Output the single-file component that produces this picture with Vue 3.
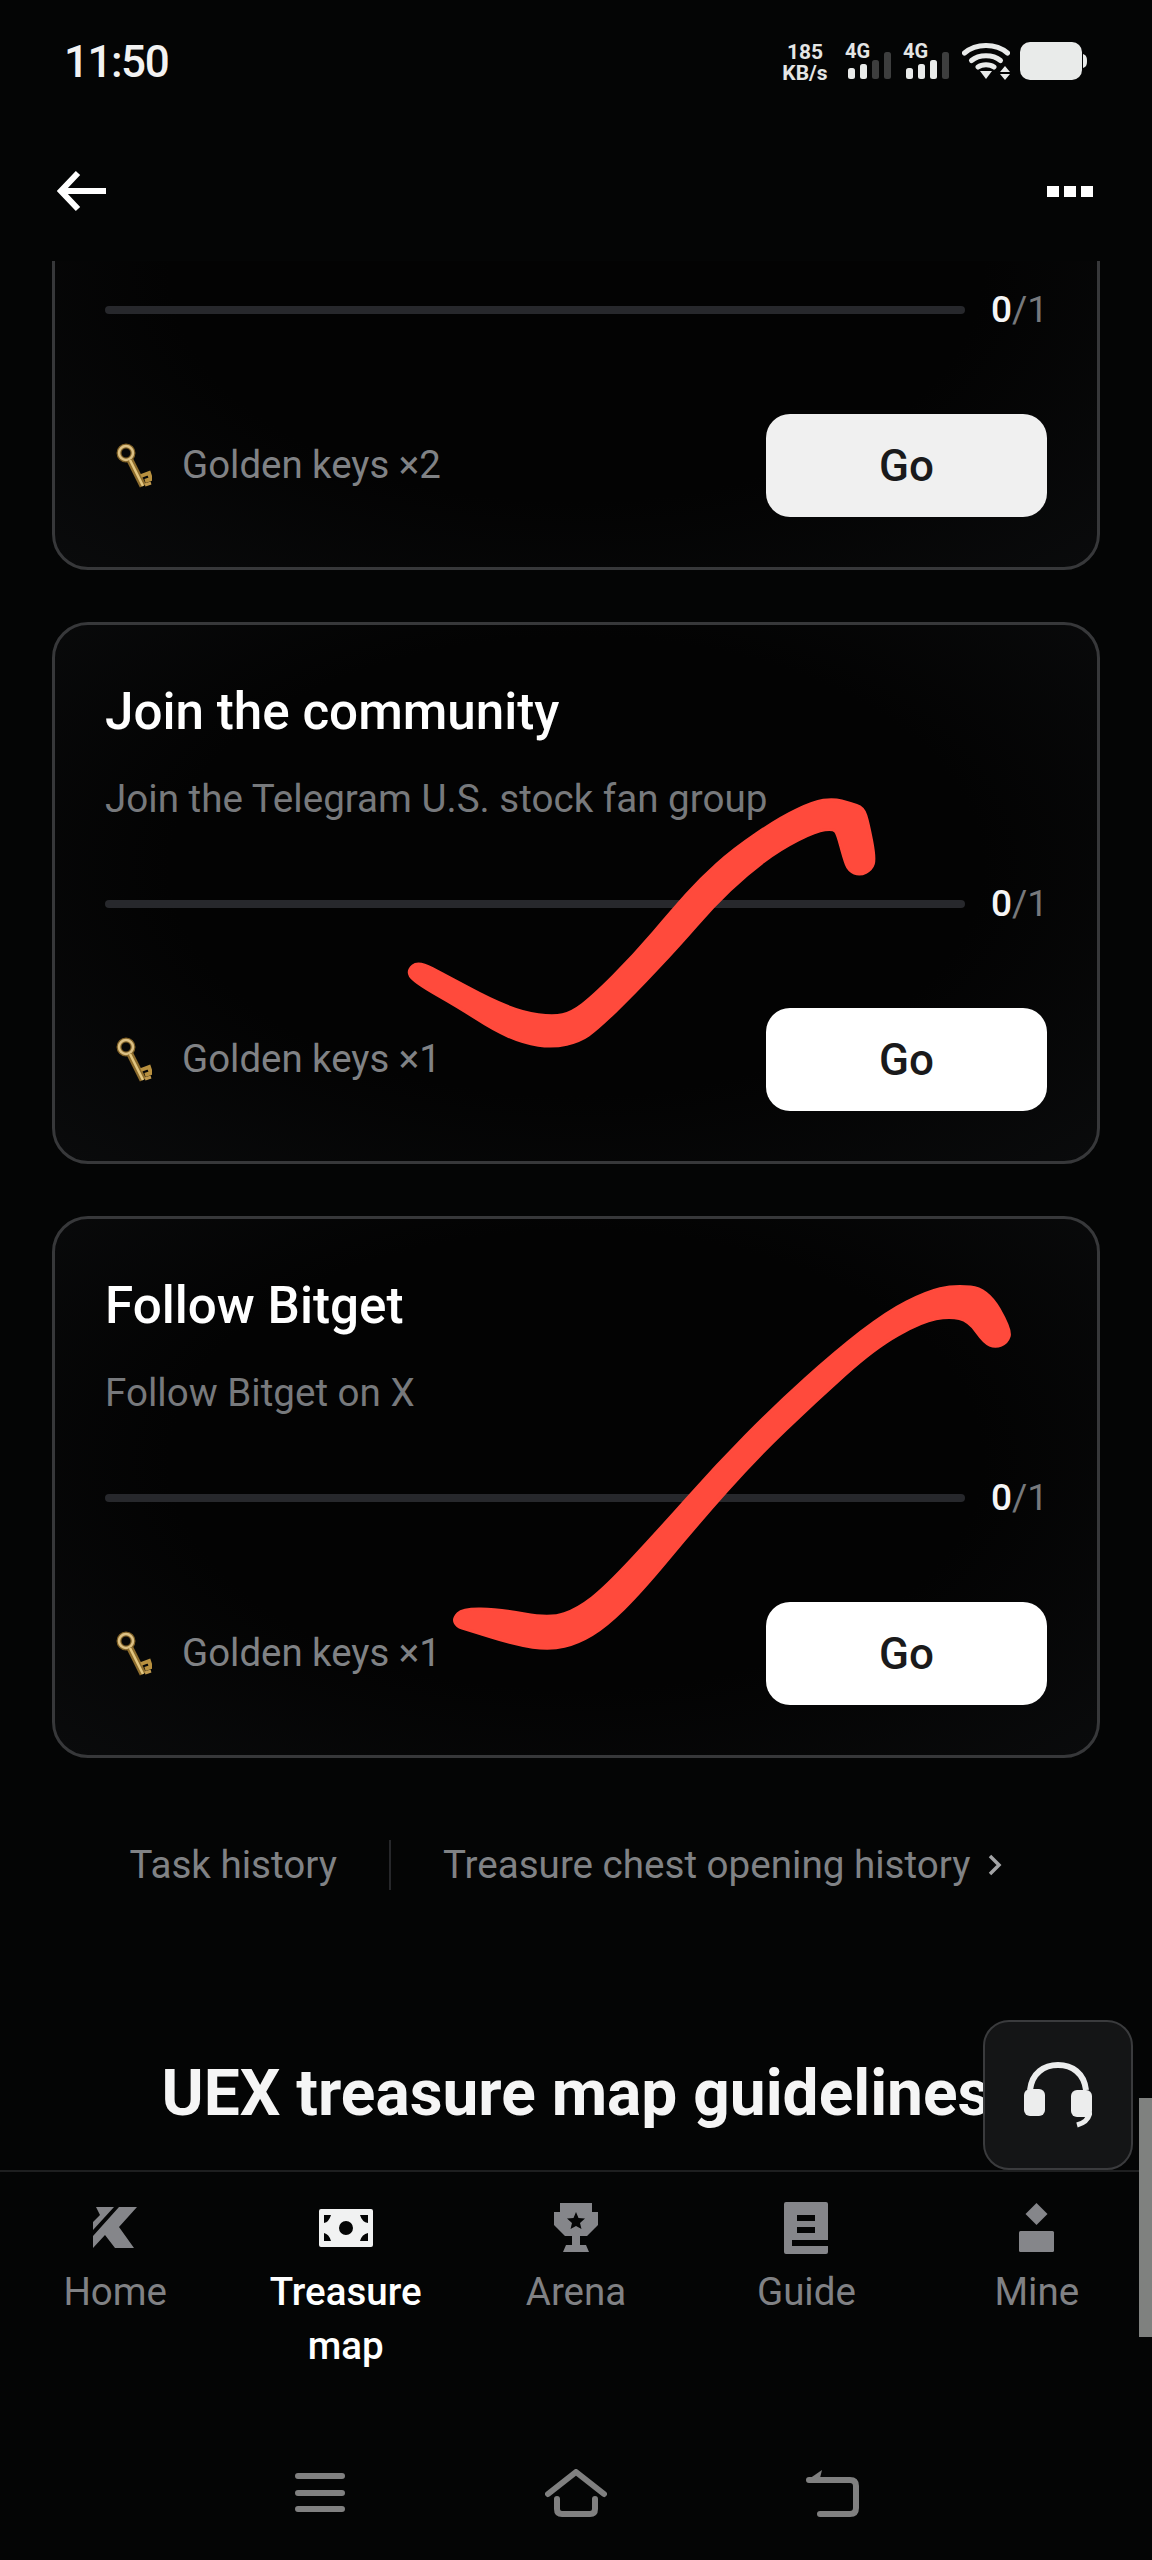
<script setup>
const tasks = [
  { id: 1, title: '', desc: '', keys: 2, dim: true },
  { id: 2, title: 'Join the community', desc: 'Join the Telegram U.S. stock fan group', keys: 1 },
  { id: 3, title: 'Follow Bitget', desc: 'Follow Bitget on X', keys: 1 }
]

const tabs = ['Home', 'Treasure map', 'Arena', 'Guide', 'Mine']

// the two red pen marks, traced from the screenshot
const smooth = (pts) => {
  const mid = (a, b) => [(a[0] + b[0]) / 2, (a[1] + b[1]) / 2]
  let start = mid(pts[pts.length - 1], pts[0])
  let d = `M${start[0]} ${start[1]}`
  pts.forEach((p, i) => {
    const m = mid(p, pts[(i + 1) % pts.length])
    d += ` Q${p[0]} ${p[1]} ${m[0]} ${m[1]}`
  })
  return d + ' Z'
}
const place = (pts, ox, oy, sx, sy) => pts.map(([x, y]) => [ox + x / sx, oy + y / sy])

const mark1 = smooth(place([
  [82, 572], [115, 543], [200, 588], [330, 658], [430, 698], [520, 710], [575, 698], [640, 648],
  [760, 528], [880, 388], [960, 298], [1060, 208], [1200, 113], [1300, 66], [1360, 56], [1410, 70],
  [1450, 82], [1465, 130], [1485, 235], [1475, 268], [1440, 286], [1406, 272], [1392, 235], [1372, 160],
  [1360, 147], [1310, 152], [1200, 208], [1100, 283], [1000, 378], [900, 493], [760, 643], [650, 748],
  [600, 783], [520, 802], [430, 789], [340, 749], [240, 684], [100, 604]
], 380, 780, 3, 3))

const mark2 = smooth(place([
  [84, 1075], [108, 1046], [200, 1048], [330, 1076], [400, 1046], [470, 981], [600, 816], [750, 616],
  [900, 436], [1050, 276], [1180, 156], [1280, 96], [1350, 76], [1435, 86], [1495, 210], [1485, 248],
  [1455, 262], [1427, 248], [1388, 183], [1340, 169], [1270, 184], [1150, 264], [1000, 424], [850, 594],
  [700, 794], [560, 994], [470, 1099], [400, 1149], [330, 1169], [240, 1154], [120, 1109], [93, 1099]
], 420, 1260, 2.529, 3))
</script>

<template>
  <div class="screen">
    <div class="status">
      <span class="time">11:50</span>
      <div class="status-right">
        <div class="speed"><span>185</span><span>KB/s</span></div>
        <div class="sim">
          <span class="sim-label">4G</span>
          <svg width="44" height="28" viewBox="0 0 44 28">
            <rect x="0" y="16" width="7" height="11" rx="2.500" fill="#e9ebea" />
            <rect x="12" y="12" width="7" height="15" rx="2.500" fill="#e9ebea" />
            <rect x="24" y="8" width="7" height="19" rx="2.500" fill="#3d3e3e" />
            <rect x="36" y="0" width="7" height="27" rx="2.500" fill="#3d3e3e" />
          </svg>
        </div>
        <div class="sim sim-two">
          <span class="sim-label">4G</span>
          <svg width="44" height="28" viewBox="0 0 44 28">
            <rect x="0" y="16" width="7" height="11" rx="2.500" fill="#e9ebea" />
            <rect x="12" y="12" width="7" height="15" rx="2.500" fill="#e9ebea" />
            <rect x="24" y="8" width="7" height="19" rx="2.500" fill="#e9ebea" />
            <rect x="36" y="0" width="7" height="27" rx="2.500" fill="#3d3e3e" />
          </svg>
        </div>
        <svg class="wifi" width="48" height="38" viewBox="0 0 48 38">
          <g fill="none" stroke="#e9ebea" stroke-width="5" stroke-linecap="round">
            <path d="M2.500 11 C14 1 34 1 45.500 11" />
            <path d="M9.500 18.500 C17 12 31 12 38.500 18.500" />
            <path d="M16 25 C20 22 28 22 32 25" />
          </g>
          <path d="M18 29 H30 L24 37 Z" fill="#e9ebea" />
          <path d="M43 24 L48 30 H38 Z M38 32 H48 L43 38 Z" fill="#e9ebea" />
        </svg>
        <svg class="battery" width="68" height="38" viewBox="0 0 68 38">
          <rect x="0" y="0" width="62" height="38" rx="10" fill="#e9ebea" />
          <path d="M63 12 C66 13 67 15 67 19 C67 23 66 25 63 26 Z" fill="#e9ebea" />
        </svg>
      </div>
    </div>

    <div class="topbar">
      <svg width="50" height="42" viewBox="0 0 50 42">
        <path d="M21 3 L4 21 L21 39 M5 21 H49" fill="none" stroke="#fff" stroke-width="6" />
      </svg>
      <div class="more"><i></i><i></i><i></i></div>
    </div>

    <div class="scroll">
      <div v-for="task in tasks" :key="task.id" class="card">
        <h3 class="card-title">{{ task.title }}</h3>
        <p class="card-desc">{{ task.desc }}</p>
        <div class="progress">
          <div class="track"></div>
          <div class="count"><b>0</b>/1</div>
        </div>
        <div class="reward">
          <svg class="key" width="36" height="46" viewBox="0 0 36 46">
            <circle cx="10" cy="10" r="7" fill="none" stroke="#7d5f26" stroke-width="5" />
            <circle cx="10" cy="10" r="7" fill="none" stroke="#dcc084" stroke-width="2.500" />
            <path d="M14 17 L27 43" stroke="#8d6c2d" stroke-width="7" />
            <path d="M14 17 L27 43" stroke="#e3c680" stroke-width="2.500" />
            <path d="M25 33 L33 30 L35 36 L29 38" fill="none" stroke="#b8903f" stroke-width="4" />
            <path d="M29 42 L35 40" fill="none" stroke="#c19a4e" stroke-width="3" />
          </svg>
          <span class="keys-text">Golden keys ×{{ task.keys }}</span>
          <button class="go" :class="{ dim: task.dim }">Go</button>
        </div>
      </div>

      <div class="links">
        <span>Task history</span>
        <i class="sep"></i>
        <span>Treasure chest opening history</span>
        <svg width="14" height="22" viewBox="0 0 14 22">
          <path d="M2 2 L11 11 L2 20" fill="none" stroke="#a3a4a6" stroke-width="3.500" />
        </svg>
      </div>

      <h2 class="guide-title">UEX treasure map guidelines</h2>
    </div>

    <nav class="tabs">
      <div v-for="(tab, i) in tabs" :key="tab" class="tab" :class="{ active: i === 1 }">
        <div class="tab-icon">
          <svg v-if="i === 0" width="46" height="44" viewBox="0 0 46 44">
            <path d="M4 1 H22 L1 24 V16 L8 9 Z M27 1 H45 L27 21 L42 42 H23 L13 29 L1 42 V30 Z" fill="#85868a" />
          </svg>
          <svg v-else-if="i === 1" width="54" height="38" viewBox="0 0 54 38">
            <path fill-rule="evenodd" fill="#f1f2f2" d="M2 0 H52 Q54 0 54 2 V36 Q54 38 52 38 H2 Q0 38 0 36 V2 Q0 0 2 0 Z M5 6 V14 Q10 13 12 6 Z M49 6 H41 Q43 13 49 14 Z M5 32 H12 Q10 25 5 24 Z M49 32 V24 Q43 25 41 32 Z M27 12 A7 7 0 1 0 27 26 A7 7 0 1 0 27 12 Z" />
          </svg>
          <svg v-else-if="i === 2" width="44" height="50" viewBox="0 0 44 50">
            <path fill-rule="evenodd" fill="#85868a" d="M6 0 H38 V9 H44 V22 L33 33 H26 V42 H32 L35 49 H9 L12 42 H18 V33 H11 L0 22 V9 H6 Z M22 9 L24.500 15 L31 15.500 L26 20 L27.500 26 L22 23 L16.500 26 L18 20 L13 15.500 L19.500 15 Z" />
          </svg>
          <svg v-else-if="i === 3" width="44" height="52" viewBox="0 0 44 52">
            <path fill-rule="evenodd" fill="#85868a" d="M2 0 H42 Q44 0 44 2 V38 H8 V44 H44 V50 Q44 52 42 52 H2 Q0 52 0 50 V2 Q0 0 2 0 Z M13 13 V19 H31 V13 Z M13 25 V31 H31 V25 Z" />
          </svg>
          <svg v-else width="36" height="50" viewBox="0 0 36 50">
            <path d="M17.500 0 L28.500 11 L17.500 22 L6.500 11 Z" fill="#85868a" />
            <rect x="0" y="28" width="35" height="21" rx="1.500" fill="#85868a" />
          </svg>
        </div>
        <span class="tab-label">{{ tab }}</span>
      </div>
    </nav>

    <div class="sysnav">
      <svg width="50" height="40" viewBox="0 0 50 40">
        <path d="M3 3 H47 M3 20 H47 M3 36 H47" fill="none" stroke="#808080" stroke-width="6" stroke-linecap="round" />
      </svg>
      <svg width="62" height="48" viewBox="0 0 62 48">
        <path d="M3 25 L31 3 L59 25 M12 30 V40 Q12 45 17 45 H45 Q50 45 50 40 V30" fill="none" stroke="#808080" stroke-width="6" stroke-linecap="round" stroke-linejoin="round" />
      </svg>
      <svg width="54" height="48" viewBox="0 0 54 48">
        <path d="M4 11 H45 Q51 11 51 17 V39 Q51 45 45 45 H15" fill="none" stroke="#808080" stroke-width="6" stroke-linecap="round" />
        <path d="M1 12 L17 1 L15 9 Z" fill="#808080" />
      </svg>
    </div>

    <div class="support">
      <svg width="68" height="66" viewBox="0 0 68 66">
        <path d="M6 28 C8 11 20 3 34 3 C48 3 60 11 62 28" fill="none" stroke="#eceded" stroke-width="6" />
        <rect x="0" y="27" width="21" height="27" rx="6" fill="#eceded" />
        <rect x="47" y="28" width="21" height="27" rx="6" fill="#eceded" />
        <path d="M66 50 C65 57 60 61 53 63" fill="none" stroke="#eceded" stroke-width="5" />
      </svg>
    </div>

    <div class="scrollbar"></div>

    <svg class="marks" width="1152" height="2560" viewBox="0 0 1152 2560">
      <path :d="mark1" fill="#ff4a3c" stroke="#ff4a3c" stroke-width="3" stroke-linejoin="round" />
      <path :d="mark2" fill="#ff4a3c" stroke="#ff4a3c" stroke-width="3" stroke-linejoin="round" />
    </svg>
  </div>
</template>

<style>
html, body {
  margin: 0;
  background: #040505;
}
</style>

<style scoped>
.screen {
  position: relative;
  width: 1152px;
  height: 2560px;
  overflow: hidden;
  display: flex;
  flex-direction: column;
  background: #040505;
  color: #fff;
  font-family: Roboto, "Liberation Sans", sans-serif;
}

.status {
  height: 120px;
  flex: none;
  box-sizing: border-box;
  padding: 37px 64px 0 64px;
  display: flex;
  justify-content: space-between;
  align-items: flex-start;
}

.time {
  font-size: 44px;
  line-height: 50px;
  font-weight: 500;
  letter-spacing: -1.500px;
  color: #f2f2f2;
}

.status-right {
  display: flex;
  align-items: flex-start;
  margin-top: 5px;
}

.speed {
  display: flex;
  flex-direction: column;
  align-items: center;
  width: 46px;
  font-size: 21px;
  line-height: 21px;
  font-weight: 700;
  color: #e4e6e5;
}

.sim {
  position: relative;
  width: 44px;
  height: 38px;
  margin-left: 20px;
}

.sim-two {
  margin-left: 14px;
}

.sim svg {
  position: absolute;
  left: 0;
  bottom: 0;
}

.sim-label {
  position: absolute;
  left: -3px;
  top: 0;
  font-size: 20px;
  line-height: 18px;
  font-weight: 700;
  color: #e4e6e5;
}

.wifi {
  margin-left: 12px;
}

.battery {
  margin-left: 10px;
}

.topbar {
  height: 141px;
  flex: none;
  box-sizing: border-box;
  padding: 50px 59px 0 57px;
  display: flex;
  justify-content: space-between;
  align-items: flex-start;
}

.more {
  display: flex;
  gap: 5px;
  margin-top: 16px;
}

.more i {
  width: 12px;
  height: 11px;
  background: #fff;
}

.scroll {
  flex: 1;
  min-height: 0;
  overflow: hidden;
  padding: 0 52px;
}

.card {
  box-sizing: border-box;
  height: 542px;
  margin-bottom: 52px;
  padding: 49px 50px 51px;
  border: 3px solid #37383a;
  border-radius: 36px;
  background: radial-gradient(ellipse at 50% 45%, #030303 55%, #0a0b0c 100%);
}

.card:first-child {
  margin-top: -233px;
}

.card-title {
  height: 74px;
  margin: 0;
  font-size: 51.200px;
  line-height: 75px;
  font-weight: 500;
  color: #fff;
}

.card-desc {
  height: 50px;
  margin: 26px 0 0;
  font-size: 38.600px;
  line-height: 50px;
  color: #77797c;
}

.progress {
  display: flex;
  align-items: center;
  gap: 26px;
  height: 40px;
  margin-top: 60px;
}

.track {
  flex: 1;
  height: 8px;
  border-radius: 4px;
  background: #27282c;
}

.count {
  width: 56px;
  font-size: 37px;
  line-height: 40px;
  color: #77797c;
}

.count b {
  font-weight: 500;
  color: #f5f5f5;
}

.reward {
  display: flex;
  align-items: center;
  height: 103px;
  margin-top: 84px;
}

.key {
  margin-left: 11px;
  flex: none;
}

.keys-text {
  margin-left: 30px;
  margin-bottom: 2px;
  flex: 1;
  font-size: 38.400px;
  line-height: 50px;
  color: #808285;
}

.go {
  width: 281px;
  height: 103px;
  border: none;
  border-radius: 24px;
  background: #fff;
  color: #1a1a1b;
  font-family: Roboto, sans-serif;
  font-size: 44px;
  font-weight: 500;
}

.go.dim {
  background: #f0f0f0;
}

.links {
  display: flex;
  align-items: center;
  justify-content: center;
  height: 50px;
  margin-top: 82px;
  padding-right: 20px;
  font-size: 38.600px;
  line-height: 50px;
  color: #808285;
}

.sep {
  width: 2px;
  height: 50px;
  margin: 0 52px;
  background: #26272a;
}

.links svg {
  margin-left: 18px;
}

.guide-title {
  margin: 169px 0 0;
  text-align: center;
  font-size: 64px;
  line-height: 70px;
  font-weight: 700;
  color: #f5f5f5;
  white-space: nowrap;
}

.tabs {
  height: 270px;
  flex: none;
  box-sizing: border-box;
  border-top: 2px solid #1e1f20;
  padding-top: 30px;
  display: grid;
  grid-template-columns: repeat(5, 1fr);
  background: #040505;
}

.tab {
  display: flex;
  flex-direction: column;
  align-items: center;
  text-align: center;
}

.tab-icon {
  height: 52px;
  display: flex;
  align-items: center;
  justify-content: center;
}

.tab-label {
  width: 180px;
  margin-top: 11px;
  font-size: 38.500px;
  line-height: 54px;
  color: #808184;
}

.tab.active .tab-label {
  color: #fff;
  font-weight: 500;
}

.sysnav {
  height: 120px;
  flex: none;
  display: grid;
  grid-template-columns: repeat(3, 256px);
  grid-template-rows: 106px;
  justify-content: center;
  justify-items: center;
  align-items: center;
}

.support {
  position: absolute;
  left: 983px;
  top: 2020px;
  width: 150px;
  height: 150px;
  box-sizing: border-box;
  border: 2px solid #3a3b3d;
  border-radius: 26px;
  background: #141516;
  display: flex;
  align-items: center;
  justify-content: center;
}

.scrollbar {
  position: absolute;
  left: 1139px;
  top: 2098px;
  width: 13px;
  height: 239px;
  background: #7f817f;
}

.marks {
  position: absolute;
  left: 0;
  top: 0;
  pointer-events: none;
}
</style>
